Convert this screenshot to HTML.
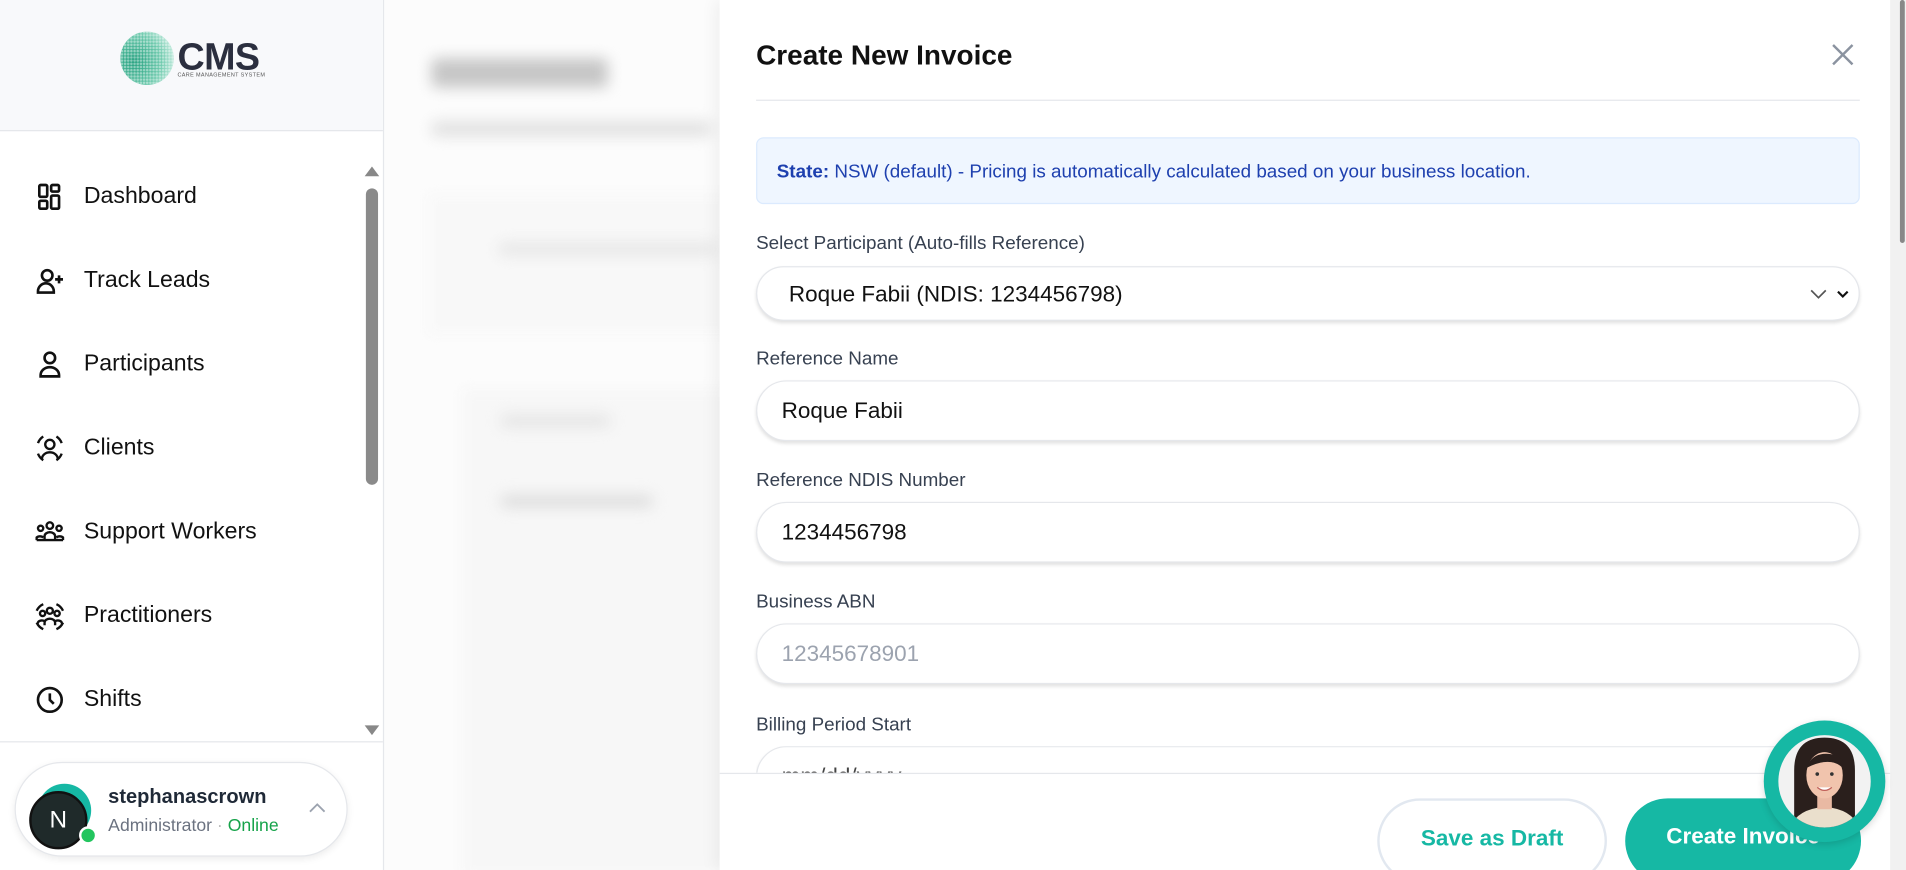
<!DOCTYPE html>
<html><head><meta charset="utf-8"><style>
html,body{margin:0;padding:0;width:1906px;height:870px;overflow:hidden;background:#fff;font-family:"Liberation Sans",Arial,sans-serif}
#w{position:absolute;left:0;top:0;width:1568px;height:716px;transform:scale(1.21556,1.2151);transform-origin:0 0;overflow:hidden}
.abs{position:absolute}
.nav{position:absolute;left:28px;font-size:19px;color:#111;display:flex;align-items:center}
.nav svg{width:26px;height:26px;margin-right:15px}
.lbl{position:absolute;left:622px;font-size:15.5px;color:#374151}
.inp{position:absolute;left:622px;width:908px;height:50px;border:1px solid #e5e7eb;border-radius:25px;box-shadow:0 2px 3px rgba(0,0,0,.12);box-sizing:border-box;font-size:18.5px;color:#111;padding-left:20px;line-height:48px;background:#fff}
.blur{position:absolute;background:#c8c8c8;filter:blur(6px);border-radius:4px}
</style></head><body><div id="w">
<div class="abs" style="left:315px;top:0;width:1253px;height:716px;background:#fcfcfc"></div>
<div class="blur" style="left:355px;top:48px;width:145px;height:24px;background:#c6c6c6"></div>
<div class="blur" style="left:355px;top:100px;width:230px;height:12px;background:#e0e0e0"></div>
<div class="abs" style="left:352px;top:160px;width:260px;height:115px;background:#f8f8f8;filter:blur(5px)"></div>
<div class="blur" style="left:410px;top:200px;width:180px;height:10px;background:#e6e6e6"></div>
<div class="abs" style="left:380px;top:320px;width:240px;height:400px;background:#f7f7f7;filter:blur(5px)"></div>
<div class="blur" style="left:412px;top:342px;width:90px;height:9px;background:#e2e2e2"></div>
<div class="blur" style="left:412px;top:408px;width:125px;height:9px;background:#dadada"></div>
<!-- sidebar -->
<div class="abs" style="left:0;top:0;width:315px;height:716px;background:#fff;border-right:1px solid #e5e7eb"></div>
<div class="abs" style="left:0;top:0;width:315px;height:107px;background:#f8f9fb;border-bottom:1px solid #e5e7eb"></div>
<svg class="abs" style="left:99px;top:20px" width="46" height="56" viewBox="0 0 46 56">
<defs><radialGradient id="g" cx="0.25" cy="0.55" r="0.85"><stop offset="0" stop-color="#1f9e7c"/><stop offset="0.6" stop-color="#6cc9ac"/><stop offset="1" stop-color="#d9f3ea"/></radialGradient>
<pattern id="d" width="2.6" height="2.6" patternUnits="userSpaceOnUse"><circle cx="1.3" cy="1.3" r="1.05" fill="#fff"/></pattern></defs>
<circle cx="22" cy="28" r="22" fill="url(#g)"/><circle cx="22" cy="28" r="22" fill="url(#d)" opacity=".45"/></svg>
<div class="abs" style="left:146px;top:29px;font-size:31px;font-weight:bold;color:#2b2f3f;letter-spacing:-0.5px">CMS</div>
<div class="abs" style="left:146px;top:59px;font-size:4.5px;color:#555;letter-spacing:.3px">CARE MANAGEMENT SYSTEM</div>

<div class="nav" style="top:149px"><svg viewBox="0 0 24 24" fill="none" stroke="#111" stroke-width="2"><rect x="4" y="3" width="6" height="9" rx="1"/><rect x="4" y="15" width="6" height="6" rx="1"/><rect x="13" y="3" width="6" height="5" rx="1"/><rect x="13" y="11" width="6" height="10" rx="1"/></svg>Dashboard</div>
<div class="nav" style="top:218px"><svg viewBox="0 0 24 24" fill="none" stroke="#111" stroke-width="2"><circle cx="10" cy="8" r="4"/><path d="M3 21v-1a6 6 0 0 1 12 0v1z"/><path d="M19 8v6M16 11h6"/></svg>Track Leads</div>
<div class="nav" style="top:287px"><svg viewBox="0 0 24 24" fill="none" stroke="#111" stroke-width="2"><circle cx="12" cy="7" r="4"/><path d="M5 21v-1a7 6 0 0 1 14 0v1z"/></svg>Participants</div>
<div class="nav" style="top:356px"><svg viewBox="0 0 24 24" fill="none" stroke="#111" stroke-width="1.8"><circle cx="12" cy="9" r="3.5"/><path d="M6 20a6 5 0 0 1 12 0"/><path d="M3 8a10 10 0 0 1 4-5M21 8a10 10 0 0 0-4-5M3 16a10 10 0 0 0 4 5M21 16a10 10 0 0 1-4 5"/></svg>Clients</div>
<div class="nav" style="top:425px"><svg viewBox="0 0 24 24" fill="none" stroke="#111" stroke-width="1.8"><circle cx="12" cy="7" r="2.5"/><circle cx="5" cy="9" r="2"/><circle cx="19" cy="9" r="2"/><path d="M8 18v-3a4 3 0 0 1 8 0v3zM2 18v-2a3 2 0 0 1 5 0M22 18v-2a3 2 0 0 0-5 0M2 18h20"/></svg>Support Workers</div>
<div class="nav" style="top:494px"><svg viewBox="0 0 24 24" fill="none" stroke="#111" stroke-width="1.8"><circle cx="12" cy="8" r="2.3"/><circle cx="6.5" cy="10" r="2"/><circle cx="17.5" cy="10" r="2"/><path d="M8 19v-2a4 3 0 0 1 8 0v2M3 18a3 2 0 0 1 5-2M21 18a3 2 0 0 0-5-2"/><path d="M2 8a10 10 0 0 1 5-5M22 8a10 10 0 0 0-5-5M2 17a10 10 0 0 0 5 5M22 17a10 10 0 0 1-5 5"/></svg>Practitioners</div>
<div class="nav" style="top:563px"><svg viewBox="0 0 24 24" fill="none" stroke="#111" stroke-width="2"><circle cx="12" cy="12" r="9"/><path d="M12 7v5l3 3"/></svg>Shifts</div>
<div class="abs" style="left:300px;top:137px;width:0;height:0;border-left:6px solid transparent;border-right:6px solid transparent;border-bottom:8px solid #888"></div>
<div class="abs" style="left:301px;top:155px;width:10px;height:244px;background:#8a8a8a;border-radius:5px"></div>
<div class="abs" style="left:300px;top:597px;width:0;height:0;border-left:6px solid transparent;border-right:6px solid transparent;border-top:8px solid #888"></div>
<div class="abs" style="left:0;top:610px;width:315px;height:1px;background:#e5e7eb"></div>
<div class="abs" style="left:12px;top:627px;width:274px;height:78px;border:1px solid #e5e7eb;border-radius:40px;background:#fff;box-shadow:0 2px 6px rgba(0,0,0,.08);box-sizing:border-box"></div>
<div class="abs" style="left:31px;top:645px;width:44px;height:44px;border-radius:50%;background:#16b8a4"></div>
<div class="abs" style="left:24px;top:651px;width:48px;height:48px;border-radius:50%;background:#1f2a2a;border:2px solid #111;box-sizing:border-box;color:#fff;font-size:20px;text-align:center;line-height:44px">N</div>
<div class="abs" style="left:65px;top:680px;width:11px;height:11px;border-radius:50%;background:#22c55e;border:2px solid #fff"></div>
<div class="abs" style="left:89px;top:647px;font-size:16.5px;font-weight:bold;color:#1f2937">stephanascrown</div>
<div class="abs" style="left:89px;top:672px;font-size:14.5px;color:#6b7280">Administrator <span style="color:#bbb">·</span> <span style="color:#16a34a">Online</span></div>
<svg class="abs" style="left:254px;top:660px" width="14" height="10" viewBox="0 0 14 10"><path d="M1 8l6-6 6 6" fill="none" stroke="#9ca3af" stroke-width="1.5"/></svg>
<!-- modal -->
<div class="abs" style="left:592px;top:0;width:963px;height:716px;background:#fff;box-shadow:-4px 0 12px rgba(0,0,0,.05)"></div>
<div class="abs" style="left:1555px;top:0;width:13px;height:716px;background:#f1f1f1"></div>
<div class="abs" style="left:1563px;top:0;width:4px;height:200px;background:#888;border-radius:2px"></div>
<div class="abs" style="left:622px;top:32px;font-size:23px;font-weight:bold;color:#111">Create New Invoice</div>
<svg class="abs" style="left:1506px;top:35px" width="20" height="20" viewBox="0 0 20 20"><path d="M2 2l16 16M18 2L2 18" stroke="#8b93a0" stroke-width="2"/></svg>
<div class="abs" style="left:622px;top:82px;width:908px;height:1px;background:#e5e7eb"></div>
<div class="abs" style="left:622px;top:113px;width:908px;height:55px;background:#eff6ff;border:1px solid #dbeafe;border-radius:6px;box-sizing:border-box;font-size:15.5px;color:#1e40af;line-height:55px;padding-left:16px"><b>State:</b> NSW (default) - Pricing is automatically calculated based on your business location.</div>
<div class="lbl" style="top:192px">Select Participant (Auto-fills Reference)</div>
<div class="inp" style="top:219px;height:45px;line-height:43px;padding-left:26px">Roque Fabii (NDIS: 1234456798)
<svg class="abs" style="left:866px;top:17px" width="34" height="10" viewBox="0 0 34 10"><path d="M1 2l6 6 6-6" fill="none" stroke="#555" stroke-width="1.4"/><path d="M23 3l4 4 4-4" fill="none" stroke="#111" stroke-width="1.8"/></svg></div>
<div class="lbl" style="top:287px">Reference Name</div>
<div class="inp" style="top:313px">Roque Fabii</div>
<div class="lbl" style="top:387px">Reference NDIS Number</div>
<div class="inp" style="top:413px">1234456798</div>
<div class="lbl" style="top:487px">Business ABN</div>
<div class="inp" style="top:513px;color:#9ca3af">12345678901</div>
<div class="lbl" style="top:588px">Billing Period Start</div>
<div class="abs" style="left:622px;top:614px;width:908px;height:22px;overflow:hidden"><div class="inp" style="left:0;top:0;color:#444">mm/dd/yyyy</div></div>
<div class="abs" style="left:592px;top:636px;width:963px;height:1px;background:#e5e7eb"></div>
<div class="abs" style="left:1133px;top:657px;width:189px;height:70px;border:2px solid #e2e8f0;border-radius:35px;box-sizing:border-box;text-align:center;line-height:62px;color:#16b8a4;font-weight:bold;font-size:18.5px;background:#fff">Save as Draft</div>
<div class="abs" style="left:1337px;top:657px;width:194px;height:70px;border-radius:35px;background:#16b8a4;text-align:center;line-height:62px;color:#fff;font-weight:bold;font-size:18.5px">Create Invoice</div>
<div class="abs" style="left:1451px;top:593px;width:100px;height:100px;border-radius:50%;background:#16b8a4;box-shadow:0 2px 6px rgba(0,0,0,.15)"></div>
<svg class="abs" style="left:1462px;top:604px" width="78" height="78" viewBox="0 0 78 78"><clipPath id="c"><circle cx="39" cy="39" r="38"/></clipPath><g clip-path="url(#c)"><rect width="78" height="78" fill="#f2f2f2"/><path d="M14 80 L14 30 Q14 3 39 3 Q64 3 64 30 L64 80Z" fill="#2a1f1c"/><path d="M10 80 Q14 62 39 60 Q64 62 68 80Z" fill="#eadfcc"/><rect x="33" y="48" width="12" height="14" fill="#e9b9a3"/><ellipse cx="39" cy="34" rx="15" ry="19" fill="#f1c4ad"/><path d="M24 28 Q30 12 50 18 Q54 22 54 28 Q44 18 24 28Z" fill="#2a1f1c"/><circle cx="33" cy="33" r="1.5" fill="#333"/><circle cx="45" cy="33" r="1.5" fill="#333"/><path d="M33 44 Q39 49 45 44" fill="#fff" stroke="#c0615a" stroke-width="1"/></g></svg>
</div></body></html>
